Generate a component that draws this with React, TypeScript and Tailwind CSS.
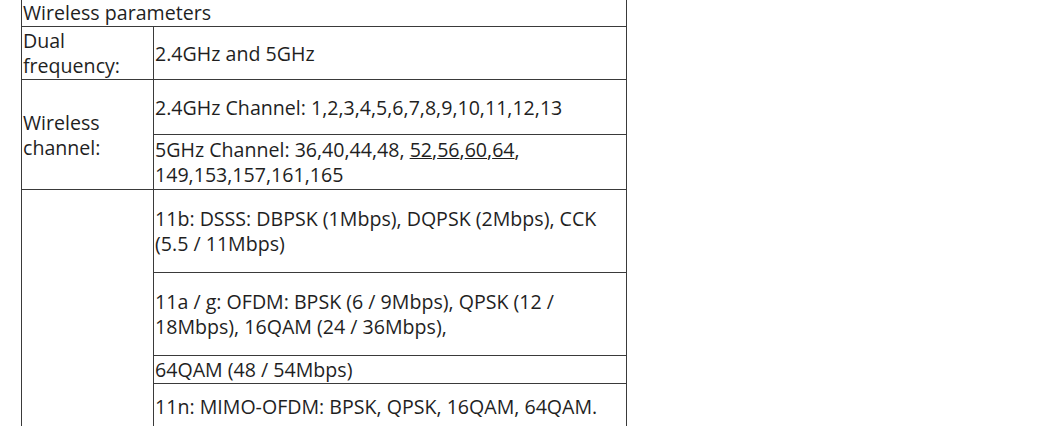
const line = "border-[#3a3a3a]";

function Sub({ h, last, children }: { h: string; last?: boolean; children?: React.ReactNode }) {
  return (
    <div className={`flex items-center pl-px ${h} ${last ? "" : `border-b ${line}`}`}>
      <div>{children}</div>
    </div>
  );
}

function Row({ label, children }: { label?: React.ReactNode; children: React.ReactNode }) {
  return (
    <div className={`flex border-b ${line}`}>
      <div className={`flex w-[132px] shrink-0 items-center border-r pl-px ${line}`}>
        <div>{label}</div>
      </div>
      <div className="flex flex-1 flex-col">{children}</div>
    </div>
  );
}

export default function App() {
  return (
    <div
      className="h-[426px] overflow-hidden bg-white pl-[21px] text-[19.6px] leading-[25px] text-[#1f1f1f]"
      style={{ fontFamily: '"Open Sans", "Noto Sans", sans-serif' }}
    >
      <div className={`w-[606px] border-x ${line}`}>
        <div className={`flex h-[27px] items-start border-b pl-px ${line}`}>Wireless parameters</div>

        <Row
          label={
            <>
              Dual
              <br />
              frequency:
            </>
          }
        >
          <Sub h="h-[52px]" last>
            2.4GHz and 5GHz
          </Sub>
        </Row>

        <Row
          label={
            <>
              Wireless
              <br />
              channel:
            </>
          }
        >
          <Sub h="h-[55px]">2.4GHz Channel: 1,2,3,4,5,6,7,8,9,10,11,12,13</Sub>
          <Sub h="h-[54px]" last>
            5GHz Channel: 36,40,44,48, <span className="underline">52</span>,
            <span className="underline">56</span>,<span className="underline">60</span>,
            <span className="underline">64</span>,
            <br />
            149,153,157,161,165
          </Sub>
        </Row>

        <Row>
          <Sub h="h-[83px]">
            11b: DSSS: DBPSK (1Mbps), DQPSK (2Mbps), CCK
            <br />
            (5.5 / 11Mbps)
          </Sub>
          <Sub h="h-[83px]">
            11a / g: OFDM: BPSK (6 / 9Mbps), QPSK (12 /
            <br />
            18Mbps), 16QAM (24 / 36Mbps),
          </Sub>
          <Sub h="h-[28px]">64QAM (48 / 54Mbps)</Sub>
          <div className="h-[64px] pl-px pt-[10px]">11n: MIMO-OFDM: BPSK, QPSK, 16QAM, 64QAM.</div>
        </Row>
      </div>
    </div>
  );
}
